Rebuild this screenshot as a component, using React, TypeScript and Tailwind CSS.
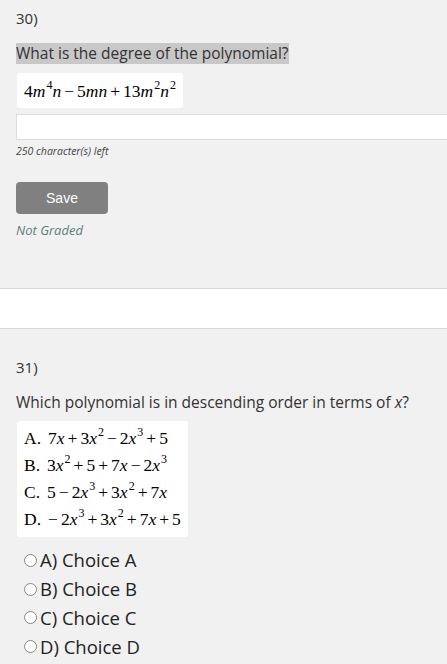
import type { FC, ReactNode } from 'react';

const V: FC<{ children: ReactNode }> = ({ children }) => <i className="italic">{children}</i>;

const Sup: FC<{ children: ReactNode }> = ({ children }) => (
  <span className="ml-px align-[8px] text-[12px] leading-none">{children}</span>
);

const Op: FC<{ children: ReactNode }> = ({ children }) => <span className="mx-[3px]">{children}</span>;

const MathBox: FC<{ children: ReactNode; className?: string }> = ({ children, className }) => (
  <div
    className={`inline-block rounded-[3px] bg-white px-[7px] text-[17.5px] text-black ${className ?? ''}`}
    style={{ fontFamily: '"Liberation Serif", serif' }}
  >
    {children}
  </div>
);

const choices = ['A) Choice A', 'B) Choice B', 'C) Choice C', 'D) Choice D'];

export default function App() {
  return (
    <div
      className="min-h-[664px] w-[447px] overflow-hidden bg-[#f1f1f1] text-[#333]"
      style={{ fontFamily: '"Open Sans", sans-serif' }}
    >
      {/* question 30 */}
      <section className="pl-4 pt-[8px] pb-[49px]">
        <p className="text-[15px] leading-[20px]">30)</p>
        <p className="mt-[15px] inline-block bg-[#c8c8c8] text-[15.5px] leading-[21px]">
          What is the degree of the polynomial?
        </p>
        <div className="mt-[8px] pl-px">
          <MathBox className="py-[6px] leading-[21px]">
            4<V>m</V>
            <Sup>4</Sup>
            <V>n</V>
            <Op>−</Op>5<V>mn</V>
            <Op>+</Op>13<V>m</V>
            <Sup>2</Sup>
            <V>n</V>
            <Sup>2</Sup>
          </MathBox>
        </div>
        <div className="mt-[6px] h-[26px] w-[460px] border border-[#dcdcdc] bg-white" />
        <p className="mt-[3px] text-[10.5px] italic leading-[16px] text-[#444]">250 character(s) left</p>
        <button
          className="mt-[23px] block h-[32px] w-[92px] rounded-[4px] bg-[#808080] text-[14px] text-white"
          style={{ fontFamily: '"Liberation Sans", sans-serif' }}
        >
          Save
        </button>
        <p className="mt-[7px] text-[13px] italic leading-[18px] text-[#5b807a]">Not Graded</p>
      </section>

      <div className="h-[41px] border-y border-[#d8d8d8] bg-white" />

      {/* question 31 */}
      <section className="pl-4 pt-[28px]">
        <p className="text-[15px] leading-[20px]">31)</p>
        <p className="mt-[15px] text-[15.5px] leading-[21px]">
          Which polynomial is in descending order in terms of <span className="italic">x</span>?
        </p>
        <div className="mt-[8px] pl-px">
          <MathBox className="py-[4px] leading-[27px]">
            <div>
              A.<span className="ml-[7px]" />7<V>x</V>
              <Op>+</Op>3<V>x</V>
              <Sup>2</Sup>
              <Op>−</Op>2<V>x</V>
              <Sup>3</Sup>
              <Op>+</Op>5
            </div>
            <div>
              B.<span className="ml-[7px]" />3<V>x</V>
              <Sup>2</Sup>
              <Op>+</Op>5<Op>+</Op>7<V>x</V>
              <Op>−</Op>2<V>x</V>
              <Sup>3</Sup>
            </div>
            <div>
              C.<span className="ml-[7px]" />5<Op>−</Op>2<V>x</V>
              <Sup>3</Sup>
              <Op>+</Op>3<V>x</V>
              <Sup>2</Sup>
              <Op>+</Op>7<V>x</V>
            </div>
            <div>
              D.<span className="ml-[7px]" />−<span className="ml-[3px]" />2<V>x</V>
              <Sup>3</Sup>
              <Op>+</Op>3<V>x</V>
              <Sup>2</Sup>
              <Op>+</Op>7<V>x</V>
              <Op>+</Op>5
            </div>
          </MathBox>
        </div>
        <div className="mt-[9px] flex flex-col">
          {choices.map((c) => (
            <label key={c} className="flex h-[28.7px] items-center gap-[3px] pl-[8px] text-[18.5px] text-[#222]">
              <span className="inline-block h-[13px] w-[13px] rounded-full border border-[#888] bg-white" />
              {c}
            </label>
          ))}
        </div>
      </section>
    </div>
  );
}
